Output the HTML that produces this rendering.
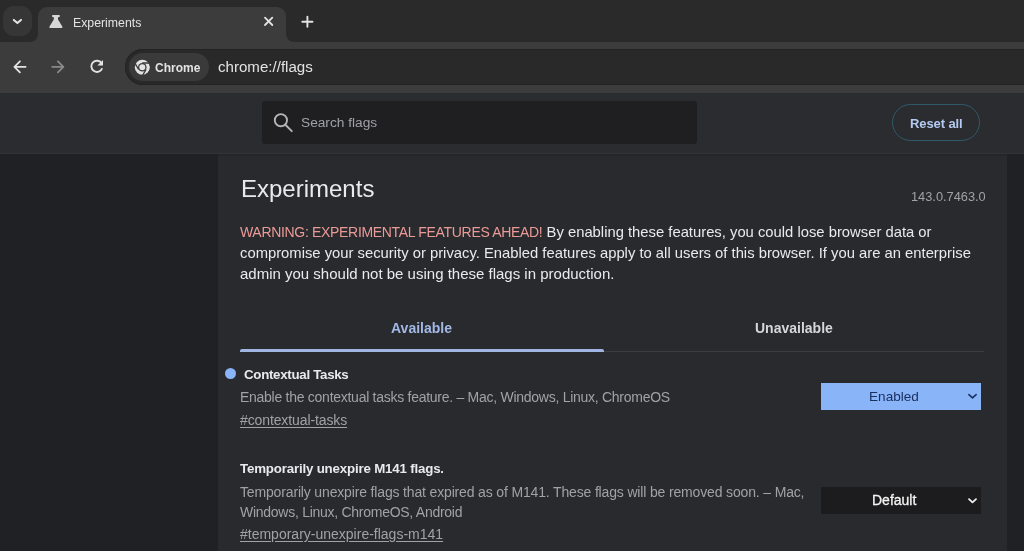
<!DOCTYPE html>
<html><head><meta charset="utf-8">
<style>
*{margin:0;padding:0;box-sizing:border-box}
html,body{width:1024px;height:551px;overflow:hidden;background:#202124;font-family:"Liberation Sans",sans-serif;position:relative}
.abs{position:absolute}
.nw{white-space:nowrap}
#frame{left:0;top:0;width:1024px;height:42px;background:#2a2a2a}
#tabbtn{left:3px;top:6px;width:29px;height:30px;border-radius:11px;background:#363636}
#tab{left:38px;top:7px;width:248px;height:40px;background:#3c3c3c;border-radius:9px 9px 0 0}
#toolbar{left:0;top:42px;width:1024px;height:51px;background:#3c3c3c}
#omni{left:125px;top:49px;width:940px;height:36px;border-radius:18px;background:#292929;box-shadow:inset 0 0 0 1px #232323}
#chip{left:129px;top:53px;width:80px;height:28px;border-radius:14px;background:#3a3a3a}
#header{left:0;top:93px;width:1024px;height:60px;background:#2b2c2f}
#hdrline{left:0;top:153px;width:1024px;height:1px;background:#333438}
#search{left:262px;top:101px;width:435px;height:43px;border-radius:3px;background:#1f1f21}
#reset{left:892px;top:104px;width:88px;height:37px;border-radius:19px;border:1px solid #30596b;background:transparent}
#panel{left:218px;top:154px;width:789px;height:397px;background:#292a2d}
.t{color:#e8eaed}
</style></head><body><div id="root" style="position:absolute;left:0;top:0;width:1024px;height:551px;will-change:transform">
<div id="frame" class="abs"></div>
<div id="tabbtn" class="abs"></div>
<div id="tab" class="abs"></div>
<svg class="abs" style="left:0;top:0" width="320" height="50"><path d="M38 34 V42 H30 A8 8 0 0 0 38 34 Z M286 34 V42 H294 A8 8 0 0 1 286 34 Z" fill="#3c3c3c"/></svg>
<div id="toolbar" class="abs"></div>
<div id="omni" class="abs"></div>
<div id="chip" class="abs"></div>
<div id="header" class="abs"></div>
<div id="hdrline" class="abs"></div>
<div id="search" class="abs"></div>
<div id="reset" class="abs"></div>
<div id="panel" class="abs"></div>
<div class="abs" style="left:218px;top:154px;width:789px;height:2px;background:#252629"></div>

<!-- tab strip text -->
<div class="abs nw" style="left:73px;top:16px;font-size:12.3px;line-height:15px;color:#e3e3e3">Experiments</div>
<div class="abs nw" style="left:218px;top:58px;font-size:15.1px;line-height:18px;color:#e3e3e3">chrome://flags</div>
<div class="abs nw" style="left:155px;top:61px;font-size:12px;line-height:15px;font-weight:bold;color:#e3e3e3">Chrome</div>

<div class="abs nw" style="left:301px;top:115px;font-size:13.7px;line-height:16px;color:#a0a2a6">Search flags</div>
<div class="abs nw" style="left:910px;top:116px;font-size:13px;line-height:16px;font-weight:bold;letter-spacing:-0.1px;color:#b3cbf2">Reset all</div>

<!-- panel content -->
<div class="abs nw t" style="left:241px;top:175px;font-size:24px;line-height:28px">Experiments</div>
<div class="abs nw" style="left:911px;top:189px;font-size:12.8px;line-height:16px;color:#a0a2a6">143.0.7463.0</div>

<div class="abs nw t" style="left:240px;top:223px;font-size:14.8px;line-height:18px"><span style="color:#eb9b97;font-size:14px;letter-spacing:-0.32px">WARNING: EXPERIMENTAL FEATURES AHEAD!</span> By enabling these features, you could lose browser data or</div>
<div class="abs nw t" style="left:240px;top:244px;font-size:14.8px;line-height:18px">compromise your security or privacy. Enabled features apply to all users of this browser. If you are an enterprise</div>
<div class="abs nw t" style="left:240px;top:265px;font-size:15px;line-height:18px">admin you should not be using these flags in production.</div>

<div class="abs nw" style="left:391px;top:320px;font-size:14px;line-height:16px;font-weight:bold;color:#a2b8e6">Available</div>
<div class="abs nw" style="left:755px;top:320px;font-size:14px;line-height:16px;font-weight:bold;color:#d6d7da">Unavailable</div>
<div class="abs" style="left:240px;top:351px;width:744px;height:1px;background:#3c3d41"></div>
<div class="abs" style="left:240px;top:349px;width:364px;height:3px;background:#a0b5e2;border-radius:2px 2px 0 0"></div>

<div class="abs" style="left:225px;top:368px;width:11px;height:11px;border-radius:50%;background:#8ab4f8"></div>
<div class="abs nw t" style="left:244px;top:367px;font-size:13.3px;line-height:16px;font-weight:bold;letter-spacing:-0.29px">Contextual Tasks</div>
<div class="abs nw" style="left:240px;top:389px;font-size:14px;line-height:16px;letter-spacing:-0.27px;color:#a0a2a6">Enable the contextual tasks feature. – Mac, Windows, Linux, ChromeOS</div>
<div class="abs nw" style="left:240px;top:412px;font-size:14px;line-height:16px;letter-spacing:-0.11px;color:#a0a2a6;text-decoration:underline;text-underline-offset:2px">#contextual-tasks</div>
<div class="abs" style="left:821px;top:383px;width:160px;height:27px;background:#8ab4f8"></div>
<div class="abs nw" style="left:869px;top:389px;font-size:13.6px;line-height:16px;color:#1a3160">Enabled</div>

<div class="abs nw t" style="left:240px;top:461px;font-size:13.3px;line-height:16px;font-weight:bold;letter-spacing:-0.18px">Temporarily unexpire M141 flags.</div>
<div class="abs nw" style="left:240px;top:484px;font-size:14px;line-height:16px;letter-spacing:-0.156px;color:#a0a2a6">Temporarily unexpire flags that expired as of M141. These flags will be removed soon. – Mac,</div>
<div class="abs nw" style="left:240px;top:504px;font-size:14px;line-height:16px;letter-spacing:-0.27px;color:#a0a2a6">Windows, Linux, ChromeOS, Android</div>
<div class="abs nw" style="left:240px;top:526px;font-size:14px;line-height:16px;color:#a0a2a6;text-decoration:underline;text-underline-offset:2px">#temporary-unexpire-flags-m141</div>
<div class="abs" style="left:821px;top:487px;width:160px;height:27px;background:#1c1c1e"></div>
<div class="abs nw" style="left:872px;top:492px;font-size:14px;line-height:17px;color:#f4f4f4;-webkit-text-stroke:0.3px #f4f4f4">Default</div>

<!-- icons -->
<svg class="abs" style="left:0;top:0" width="1024" height="160" viewBox="0 0 1024 160">
  <path d="M13.8 19.9 L17.4 23.1 L21 19.9" fill="none" stroke="#e3e3e3" stroke-width="2" stroke-linecap="round" stroke-linejoin="round"/>
  <path d="M52.2 15 H59.7 V16.9 L58 17.2 V19.6 L62.3 26.6 Q63 28.1 61.5 28.1 H50.3 Q48.8 28.1 49.5 26.6 L53.8 19.6 V17.2 L52.2 16.9 Z" fill="#d6d6d6"/>
  <path d="M265 17.7 L272.3 25 M272.3 17.7 L265 25" stroke="#e3e3e3" stroke-width="1.8" stroke-linecap="round"/>
  <path d="M302.3 21.7 H312.5 M307.4 16.6 V26.8" stroke="#e3e3e3" stroke-width="1.9" stroke-linecap="round"/>
  <path d="M25.6 66.8 H14.6 M19.9 61.3 L14.4 66.8 L19.9 72.3" fill="none" stroke="#e3e3e3" stroke-width="1.8" stroke-linecap="round" stroke-linejoin="round"/>
  <path d="M52.2 66.8 H63.2 M57.9 61.3 L63.4 66.8 L57.9 72.3" fill="none" stroke="#8a8a8a" stroke-width="1.8" stroke-linecap="round" stroke-linejoin="round"/>
  <path d="M101.6 63.2 A5.6 5.6 0 1 0 102.2 68.2" fill="none" stroke="#e3e3e3" stroke-width="1.9"/>
  <path d="M103 60 V65.6 H97.4 Z" fill="#e3e3e3"/>
  <g transform="translate(142.3 67.3)">
    <circle r="7.5" fill="#e3e3e3"/>
    <circle r="4.3" fill="#3a3a3a"/>
    <circle r="3.0" fill="#e3e3e3"/>
    <path d="M0 -4.3 H7.6 M-3.72 2.15 L-7.5 -4.4 M3.72 2.15 L0 8.6" stroke="#3a3a3a" stroke-width="1.3"/>
  </g>
  <circle cx="280.9" cy="120.2" r="6.1" fill="none" stroke="#b4b4b4" stroke-width="1.9"/>
  <path d="M285.6 125 L291.8 131.2" stroke="#b4b4b4" stroke-width="1.9" stroke-linecap="round"/>
</svg>
<svg class="abs" style="left:0;top:360px" width="1024" height="191" viewBox="0 360 1024 191">
  <path d="M968.9 394.6 L972.5 397.9 L976.1 394.6" fill="none" stroke="#1a3160" stroke-width="1.6" stroke-linecap="round" stroke-linejoin="round"/>
  <path d="M969 499.1 L972.5 502.3 L976 499.1" fill="none" stroke="#eeeeee" stroke-width="1.8" stroke-linecap="round" stroke-linejoin="round"/>
</svg>
</div></body></html>
